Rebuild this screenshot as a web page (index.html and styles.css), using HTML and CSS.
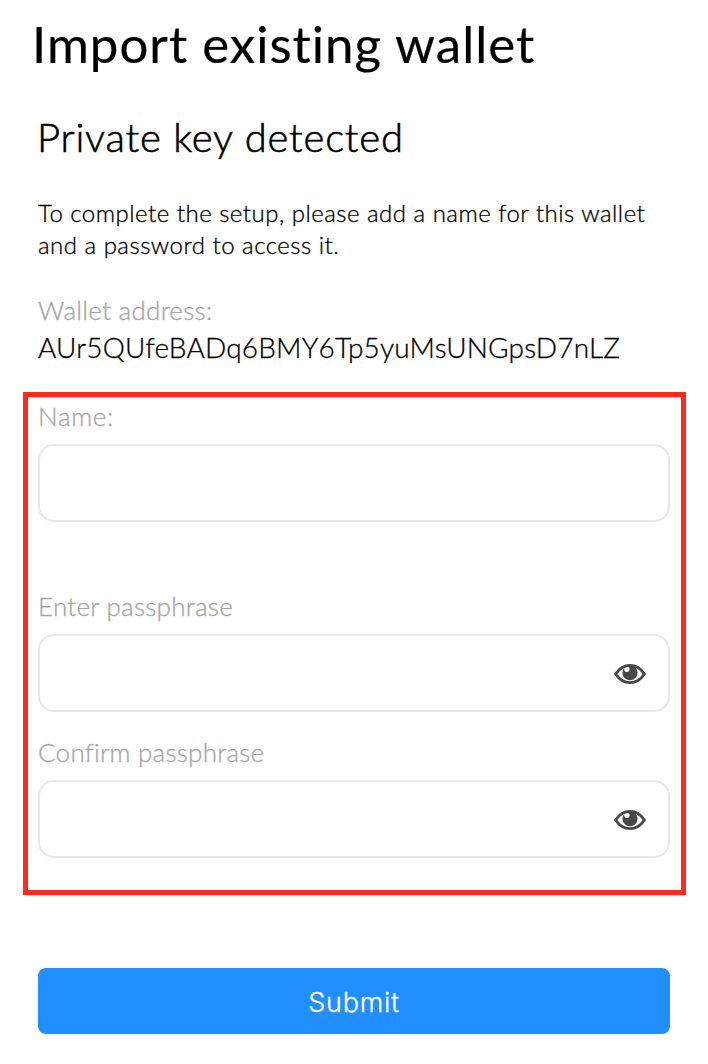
FILE: index.html
```html
<!DOCTYPE html>
<html lang="en">
<head>
<meta charset="utf-8">
<title>Import existing wallet</title>
<link rel="stylesheet" href="styles.css">
</head>
<body>
<svg class="sprite" aria-hidden="true">
  <symbol id="eye" viewBox="0 0 32 22">
    <path class="eye-outline" d="M1.6 11C5.400 5.200 10.400 2.400 16 2.400S26.600 5.200 30.400 11C26.600 16.800 21.600 19.600 16 19.600S5.400 16.800 1.600 11Z"/>
    <path class="eye-pupil" fill-rule="evenodd" d="M16 2.200A7.500 7.500 0 1 1 15.990 2.200ZM12.900 3.700A2.700 2.700 0 1 0 12.910 3.700Z"/>
  </symbol>
</svg>
<main class="page">
  <h1 class="title">Import existing wallet</h1>
  <h2 class="subtitle">Private key detected</h2>
  <p class="intro">To complete the setup, please add a name for this wallet<br>and a password to access it.</p>
  <div class="label label-address">Wallet address:</div>
  <div class="address">AUr5QUfeBADq6BMY6Tp5yuMsUNGpsD7nLZ</div>
  <form class="form">
    <div class="fields">
      <div class="field field-name">
        <label class="label label-name" for="name">Name:</label>
        <div class="box"><input class="input" id="name" type="text"></div>
      </div>
      <div class="field">
        <label class="label" for="pass">Enter passphrase</label>
        <div class="box"><input class="input" id="pass" type="password"><svg class="eye"><use href="#eye"/></svg></div>
      </div>
      <div class="field">
        <label class="label" for="confirm">Confirm passphrase</label>
        <div class="box"><input class="input" id="confirm" type="password"><svg class="eye"><use href="#eye"/></svg></div>
      </div>
    </div>
    <button class="submit" type="button">Submit</button>
  </form>
</main>
</body>
</html>
```
FILE: styles.css
```css
* { box-sizing: border-box; }
body {
  margin: 0;
  background: #fff;
  color: #000;
  font-family: Lato, "Open Sans", sans-serif;
  font-weight: 300;
  -webkit-text-stroke: 0.3px;
}
.sprite { display: none; }
.page { display: flow-root; height: 1064px; padding: 14px 22px 0 23px; }
.title {
  margin: 0 0 39px 9px;
  font-size: 51px;
  line-height: 60px;
  font-weight: 400;
  letter-spacing: 1px;
  white-space: nowrap;
  -webkit-text-stroke: 0.2px;
}
.subtitle {
  margin: 0 0 36px 14px;
  font-size: 40px;
  line-height: 48px;
  font-weight: 300;
  letter-spacing: 0.8px;
  -webkit-text-stroke: 0.6px;
}
.intro {
  margin: 0 0 33px 15px;
  font-size: 24px;
  line-height: 32px;
  letter-spacing: 0.49px;
  white-space: nowrap;
}
.label {
  display: block;
  color: #a6a6a6;
  font-size: 26px;
  line-height: 32px;
  letter-spacing: 0.27px;
}
.label-name { letter-spacing: 0.7px; }
.label-address { margin: 0 0 3px 15px; }
.address {
  margin: 0 0 27px 15px;
  font-size: 28px;
  line-height: 36px;
  letter-spacing: 0.18px;
}
.fields {
  height: 503px;
  padding: 3px 11px 0 10px;
  border: 5px solid #ff2a1c;
}
.field { margin-bottom: 24px; }
.field-name { margin-bottom: 68px; }
.box {
  display: flex;
  align-items: center;
  height: 78px;
  margin-top: 12px;
  padding: 2px 22px 0 0;
  border: 2px solid #e8e8e8;
  border-radius: 16px;
}
.input {
  flex: 1;
  min-width: 0;
  height: 100%;
  padding: 0 20px;
  border: 0;
  background: none;
  outline: 0;
  font: inherit;
  font-size: 26px;
}
.eye { width: 32px; height: 22px; }
.eye-outline { fill: none; stroke: #484848; stroke-width: 2.8; }
.eye-pupil { fill: #484848; }
.submit {
  display: block;
  width: 632px;
  height: 66px;
  margin: 73px 0 0 15px;
  padding: 2px 0 0;
  border: 0;
  border-radius: 8px;
  background: #218fff;
  color: #fff;
  font-family: Inter, sans-serif;
  font-size: 27px;
  font-weight: 300;
  letter-spacing: 0.7px;
}
```
